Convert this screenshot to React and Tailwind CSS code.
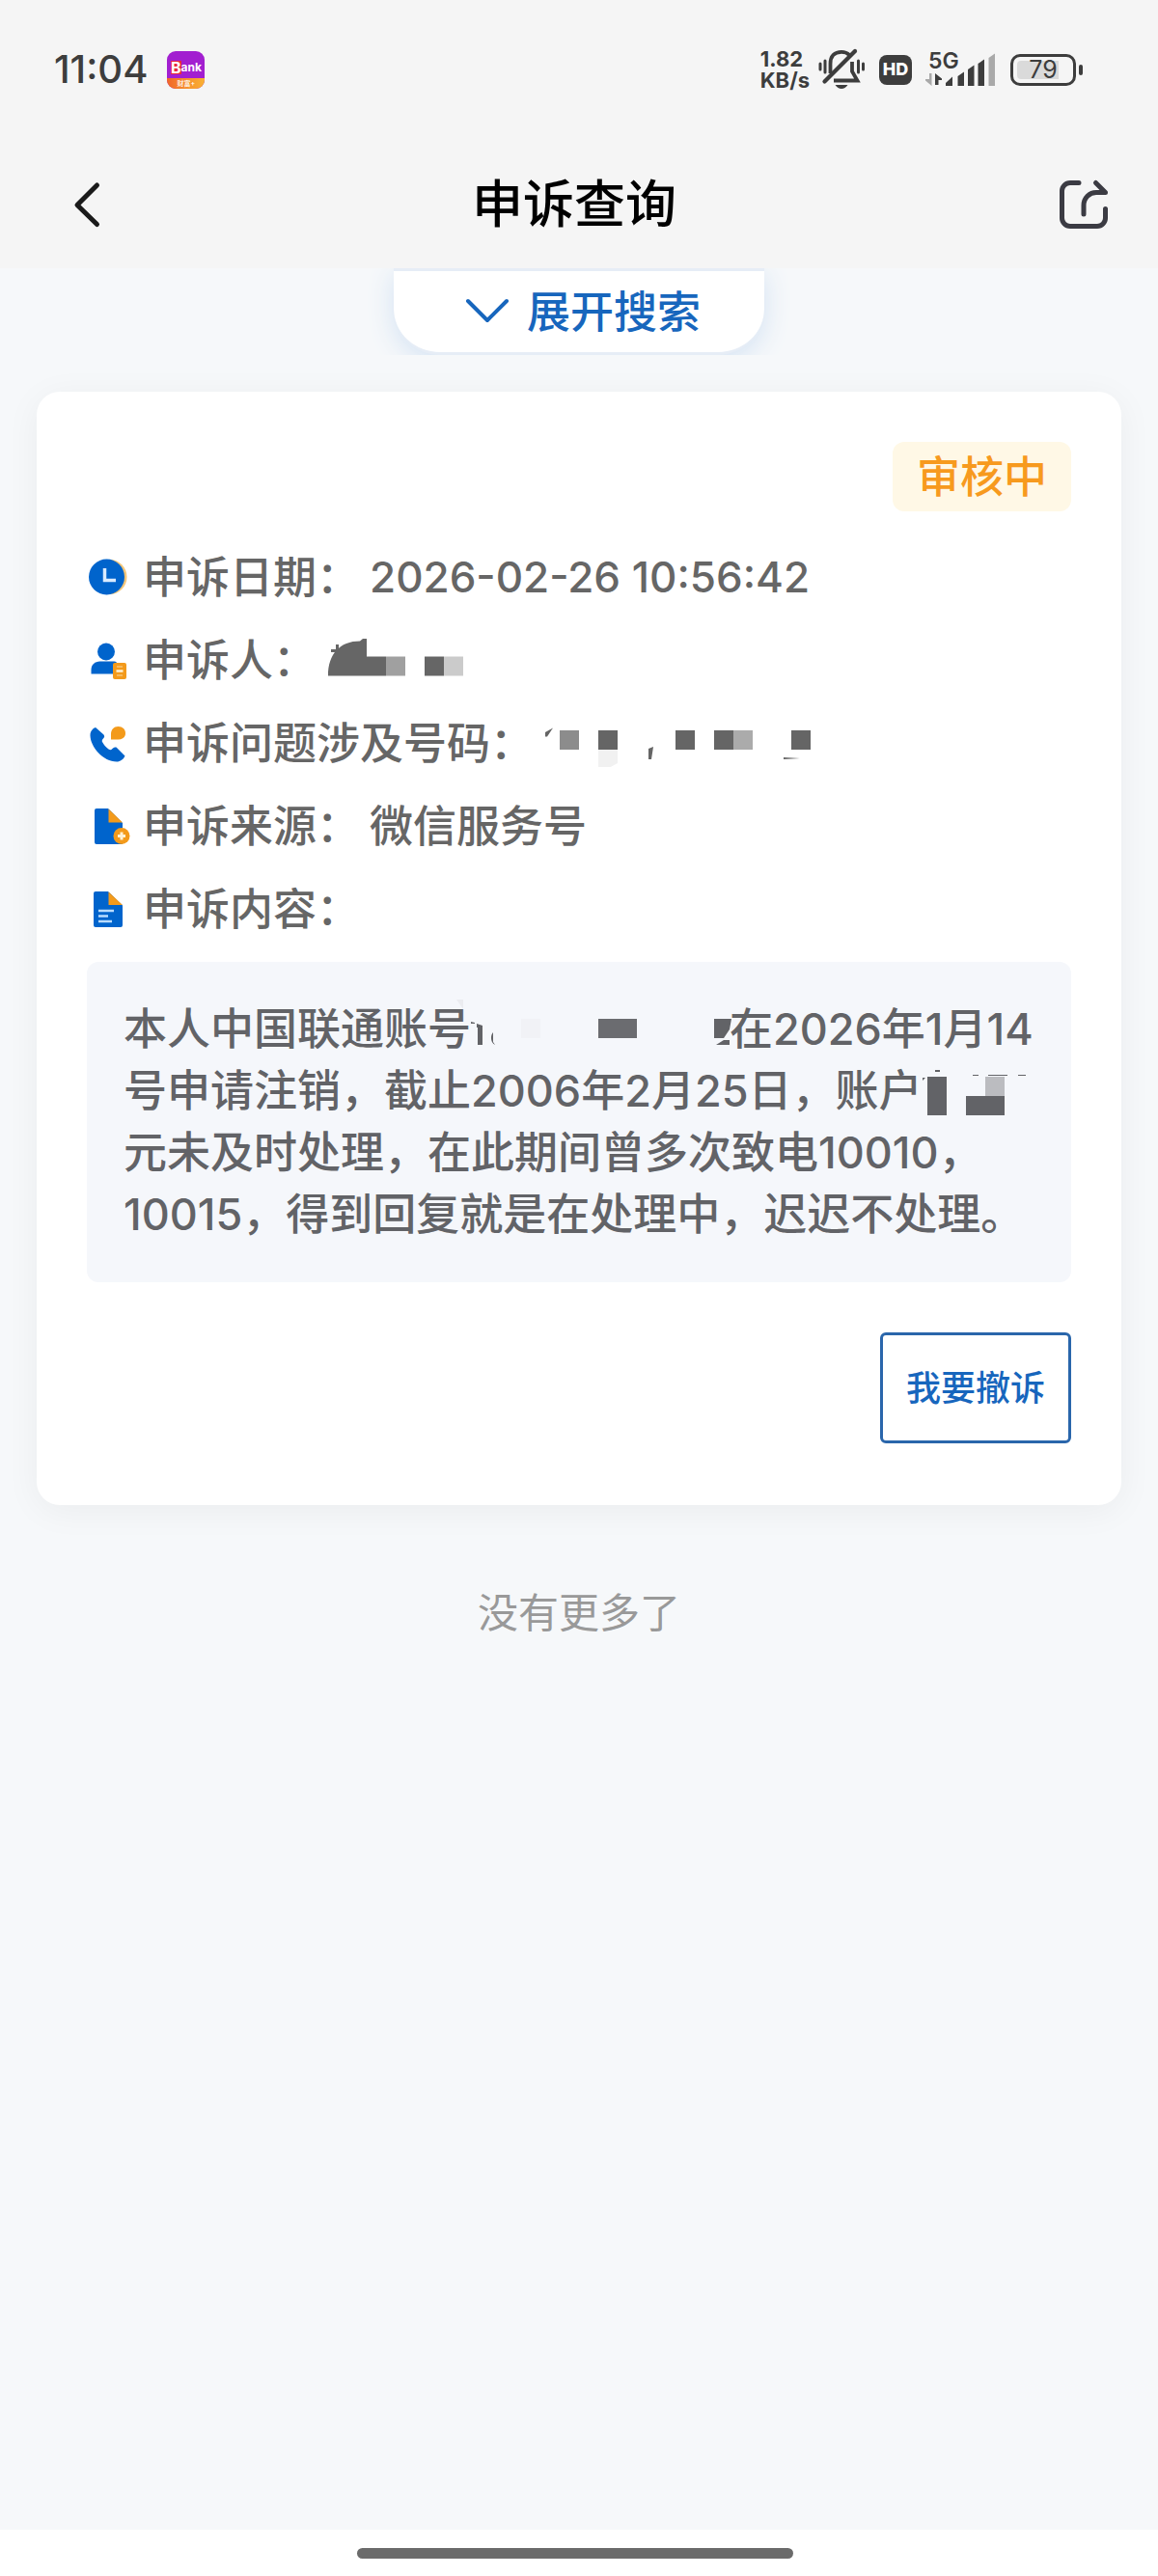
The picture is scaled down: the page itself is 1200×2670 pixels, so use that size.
const BLUE = "#0064cc";
const ORANGE = "#f39a1b";

function BankIcon() {
  return (
    <span className="relative flex h-[39px] w-[39px] flex-col overflow-hidden rounded-[9px] bg-[#a21fd0]">
      <span className="flex flex-1 items-center justify-center pt-1.5 font-bold leading-none text-white">
        <span className="bg-[#e8283c] text-[16px] leading-[14px]">B</span>
        <span className="text-[12px]">ank</span>
      </span>
      <span className="flex h-[11px] items-center justify-center bg-gradient-to-r from-[#f0662a] to-[#f9b233] text-[7px] font-medium leading-none text-white">
        财富+
      </span>
    </span>
  );
}

function MutedBell() {
  return (
    <svg className="h-[44px] w-[50px]" viewBox="0 0 50 44" fill="none" stroke="#3d3d3d" aria-hidden="true">
      <path d="M13.500 26V16C13.500 8 18 3.800 25 3.800c3.500 0 6 1 8 3" strokeWidth="3.800" />
      <path d="M36 14v10l5.500 9.500H17" strokeWidth="3.800" />
      <path d="M7.500 34.500 39 3" strokeWidth="4.200" strokeLinecap="round" />
      <path d="M18.500 38h13c-1.800 2.800-4 4-6.500 4s-4.700-1.200-6.500-4Z" fill="#3d3d3d" stroke="none" />
      <path d="M8 13v12M42.500 13v12" strokeWidth="3" strokeLinecap="round" />
      <path d="M3 16v6M47.500 16v6" strokeWidth="3" strokeLinecap="round" />
    </svg>
  );
}

function Signal() {
  return (
    <span className="relative block h-[36px] w-[74px]">
      <span className="absolute left-[3px] top-0 text-[23px] font-semibold leading-[18px]">5G</span>
      <svg className="h-[36px] w-[74px]" viewBox="0 0 74 36" fill="#3d3d3d" aria-hidden="true">
        <path d="M4 22h2.500v13L0 29.500V28h4Z" fill="#a9a9a9" />
        <path d="M10 34V22l7 5.500V29h-3.500v5Z" />
        <path d="M21 35v-3l7-6.500V35Z" />
        <path d="M33.500 35V25l6.500-4.500V35Z" />
        <path d="M44 35V18l6.500-4.500V35Z" />
        <path d="M54.500 35V12l6.500-4.500V35Z" />
        <path d="M65.500 35V6L72 1.500V35Z" fill="#a9a9a9" />
      </svg>
    </span>
  );
}

function Battery() {
  return (
    <span className="flex items-center gap-[3px]">
      <span className="relative flex h-[33px] w-[68px] items-center justify-center rounded-[10px] border-[3px] border-[#3d3d3d] text-[25px] leading-none">
        <span className="absolute inset-y-1 left-1 w-[43px] rounded-l bg-[#dadada]" />
        <span className="relative">79</span>
      </span>
      <span className="h-[11px] w-[4px] rounded-sm bg-[#3d3d3d]" />
    </span>
  );
}

function ClockIcon() {
  return (
    <>
      <circle cx="23.500" cy="22" r="18" fill="#f3c679" />
      <circle cx="20.500" cy="22" r="18.500" fill={BLUE} />
      <path d="M18.500 13v12.500H30" fill="none" stroke="#d9ebff" strokeWidth="3.500" />
    </>
  );
}

function PersonIcon() {
  return (
    <>
      <circle cx="20" cy="13.500" r="9" fill={BLUE} />
      <path d="M4.500 36.500V32c0-5 4-8.500 9-8.500h14c3 0 5 2 5 5v8Z" fill={BLUE} />
      <rect x="27" y="25" width="14" height="17" rx="2" fill={ORANGE} />
      <path d="M30.500 33.500h7" stroke="#fff2d6" strokeWidth="2.500" />
      <path d="M31 29h6M31 38h6" stroke="#f8c377" strokeWidth="1.500" />
    </>
  );
}

function PhoneIcon() {
  return (
    <>
      <path
        d="M9 6c-3 1-5.500 4-5.500 8C3.500 26 17 41.500 31 41.500c3.500 0 7-2.500 8.500-6l-8.500-8.500c-1-1-3-.5-5 1.500-1 1-2 1-3.500 0-3-2.500-5-4.500-6.500-7.500-.5-1-.3-2 .5-3 2-1.800 2-3 1-4.500Z"
        fill={BLUE}
      />
      <path d="M25 18.500v-6c0-4 3-7.500 7.500-7.500S40 8 40 12s-3 6.500-7.500 6.500Z" fill={ORANGE} />
    </>
  );
}

function SourceIcon() {
  return (
    <>
      <path d="M10 4h12l15 15v22H10a2 2 0 0 1-2-2V6a2 2 0 0 1 2-2Z" fill={BLUE} />
      <path d="M22.500 4.500 37 18.500H22.500Z" fill={ORANGE} />
      <circle cx="36" cy="32.500" r="8.500" fill={ORANGE} />
      <path d="M32 32.500h8M36 28.500v8" stroke="#fff2d6" strokeWidth="3" />
    </>
  );
}

function ContentIcon() {
  return (
    <>
      <path d="M9 4h13l15 14.500V39a2 2 0 0 1-2 2H9a2 2 0 0 1-2-2V6a2 2 0 0 1 2-2Z" fill={BLUE} />
      <path d="M22.500 4.500 37 18H22.500Z" fill={ORANGE} />
      <path d="M12 24h16M12 29.500h10M12 35h14" stroke="#b9dcff" strokeWidth="2.500" />
    </>
  );
}

function NameMosaic() {
  return (
    <svg className="ml-3 h-[44px] w-[140px]" viewBox="0 0 140 44" fill="#666" aria-hidden="true">
      <path d="M8 6h3v5h2v3H3v-3h5ZM0 38.500C0 16 12 2.500 33 2.500L36 0h4v18.500h20v20Z" />
      <path d="M60 18.500h20v20H60Z" fill="#a0a0a0" />
      <path d="M100 18.500h20v20h-20Z" />
      <path d="M120 18.500h20v20h-20Z" fill="#cbcbcb" />
    </svg>
  );
}

function NumberMosaic() {
  return (
    <svg className="ml-2 h-[50px] w-[280px]" viewBox="0 0 280 50" fill="#656565" aria-hidden="true">
      <path d="M4 14 12 9.500 6 18.500H4Z" />
      <path d="M19 12h20v20H19Z" fill="#8c8c8c" />
      <path d="M59 12h20v20H59Z" />
      <path d="M59 32h20v14l-11 6h-9Z" fill="#f1f1f1" />
      <path d="m111 31 5-2-2 13h-3Z" />
      <path d="M139 12h20v20h-20ZM179 12h20v20h-20Z" />
      <path d="M199 12h20v20h-20Z" fill="#ababab" />
      <path d="M259 12h20v20h-20ZM251 40l17 1-17 1Z" />
    </svg>
  );
}

function AccountMosaic() {
  return (
    <svg className="inline-block h-[64px] w-[268px] overflow-visible align-top" viewBox="2 0 268 64" fill="#626367" aria-hidden="true">
      <path d="M-13 1h7v10Z" fill="#ebecf0" />
      <path d="m2 24 4 1v1H2ZM8 26l6 2v20H9V30H8ZM25 35v10l2 3c-5-2-5-10-2-13Z" />
      <path d="M54 21h20v20H54Z" fill="#f1f2f6" />
      <path d="M134 21h40v20h-40Z" fill="#6b6c70" />
      <path d="M254 21h18l-2 11-6 9h-10ZM256 48l8-5h6v5Z" />
    </svg>
  );
}

function AmountMosaic() {
  return (
    <svg className="inline-block h-[64px] w-[112px] overflow-visible align-top" viewBox="7 0 112 64" fill="#626367" aria-hidden="true">
      <path d="M8 18h3l-3 3ZM21 10h5v2h-5ZM60 15h6v1h-6ZM76 15h20v1H76ZM107 15h8v1h-8Z" />
      <path d="M13 17h20v40H13ZM53 37h40v20H53Z" />
      <path d="M73 17h20v20H73Z" fill="#bbbcc0" />
    </svg>
  );
}

const fields = [
  { label: "申诉日期：", Icon: ClockIcon, value: <span className="ml-[10px] text-[44px]">2026-02-26 10:56:42</span> },
  { label: "申诉人：", Icon: PersonIcon, value: <NameMosaic /> },
  { label: "申诉问题涉及号码：", Icon: PhoneIcon, value: <NumberMosaic /> },
  { label: "申诉来源：", Icon: SourceIcon, value: <span className="ml-[10px]">微信服务号</span> },
  { label: "申诉内容：", Icon: ContentIcon, value: null },
];

export default function App() {
  return (
    <div className="flex min-h-screen flex-col bg-[#f6f8fa] font-['Inter','Noto_Sans_CJK_SC',sans-serif] text-[#3d3d3d]">
      <header className="bg-[#f5f5f5]">
        <div className="flex h-[144px] items-center justify-between pl-14 pr-[78px]">
          <div className="flex items-center gap-5">
            <time className="text-[40px] font-medium leading-none">11:04</time>
            <BankIcon />
          </div>
          <div className="flex items-center gap-[14px]">
            <div className="flex items-center gap-2">
              <div className="flex flex-col text-[22px] font-bold leading-[22px]">
                <span>1.82</span>
                <span>KB/s</span>
              </div>
              <MutedBell />
            </div>
            <span className="flex h-[31px] w-[34px] items-center justify-center rounded-lg bg-[#3d3d3d] text-[18px] font-extrabold leading-none text-white">
              HD
            </span>
            <Signal />
            <Battery />
          </div>
        </div>
        <nav className="flex h-[134px] items-center justify-between px-[50px] pt-[2px]">
          <button type="button" aria-label="返回" className="flex h-20 w-20 items-center justify-center">
            <svg className="h-[50px] w-[30px]" viewBox="0 0 30 50" fill="none" stroke="#1a1a1a" strokeWidth="5" strokeLinecap="round" strokeLinejoin="round">
              <path d="M25.500 5 5 25.500 25.500 45.500" />
            </svg>
          </button>
          <h1 className="text-[53px] font-medium leading-none text-black">申诉查询</h1>
          <button type="button" aria-label="分享" className="flex h-20 w-[90px] items-center justify-end">
            <svg className="h-[54px] w-[54px]" viewBox="0 0 54 54" fill="none" stroke="#3b3b43" strokeWidth="5" strokeLinecap="round" strokeLinejoin="round">
              <path d="M22 4.500H13A8.500 8.500 0 0 0 4.500 13v28a8.500 8.500 0 0 0 8.500 8.500h28A8.500 8.500 0 0 0 49.500 41v-9.500" />
              <path d="M27 37V28c0-8 6-13.500 13-13.500h9.500L39.500 4.500" />
            </svg>
          </button>
        </nav>
      </header>

      <main className="flex-1">
        <div className="flex h-[90px] justify-center overflow-hidden">
          <button
            type="button"
            className="flex h-[90px] w-[384px] items-center justify-center gap-[18px] rounded-b-[48px] border-y-[3px] border-[#e6edf6] bg-white pl-2 text-[45px] font-medium leading-none text-[#1766bd] shadow-[0_6px_28px_#d3e2f3]"
          >
            <svg className="h-[30px] w-[46px]" viewBox="0 0 46 30" fill="none" stroke="currentColor" strokeWidth="4" strokeLinecap="round" strokeLinejoin="round" aria-hidden="true">
              <path d="m3 4 20 20L43 4" />
            </svg>
            展开搜索
          </button>
        </div>

        <article className="mx-[38px] mt-[38px] rounded-3xl bg-white px-[52px] pb-16 pt-[52px] text-[45px] font-medium text-[#666] shadow-[0_6px_36px_rgba(0,0,0,0.05)]">
          <div className="flex justify-end">
            <span className="flex h-[72px] items-center rounded-xl bg-[#fff8e6] px-[25px] leading-none text-[#f79a1e]">审核中</span>
          </div>
          <dl className="mt-[25px]">
            {fields.map(({ label, Icon, value }) => (
              <div key={label} className="flex h-[86px] items-center leading-none">
                <svg className="mr-[14px] h-[44px] w-[44px] shrink-0 overflow-visible" viewBox="0 0 44 44" aria-hidden="true">
                  <Icon />
                </svg>
                <dt className="whitespace-nowrap">{label}</dt>
                <dd className="flex items-center whitespace-nowrap">{value}</dd>
              </div>
            ))}
          </dl>
          <p className="mt-3 whitespace-nowrap rounded-xl bg-[#f5f7fb] p-[38px] leading-[64px] text-[#626367]">
            本人中国联通账号
            <AccountMosaic />
            在2026年1月14
            <br />
            号申请注销，截止2006年2月25日，账户
            <AmountMosaic />
            <br />
            元未及时处理，在此期间曾多次致电10010，
            <br />
            10015，得到回复就是在处理中，迟迟不处理。
          </p>
          <div className="mt-[52px] flex justify-end">
            <button type="button" className="h-[115px] w-[198px] rounded-md border-[3px] border-[#2a66ab] text-[36px] font-medium leading-none text-[#1766bd]">
              我要撤诉
            </button>
          </div>
        </article>

        <p className="mt-[82px] text-center text-[42px] leading-[60px] text-[#999]">没有更多了</p>
      </main>

      <footer className="flex h-[48px] justify-center bg-white pr-2 pt-[19px]">
        <span className="h-[11px] w-[38%] rounded-full bg-[#6b6b6b]" />
      </footer>
    </div>
  );
}
